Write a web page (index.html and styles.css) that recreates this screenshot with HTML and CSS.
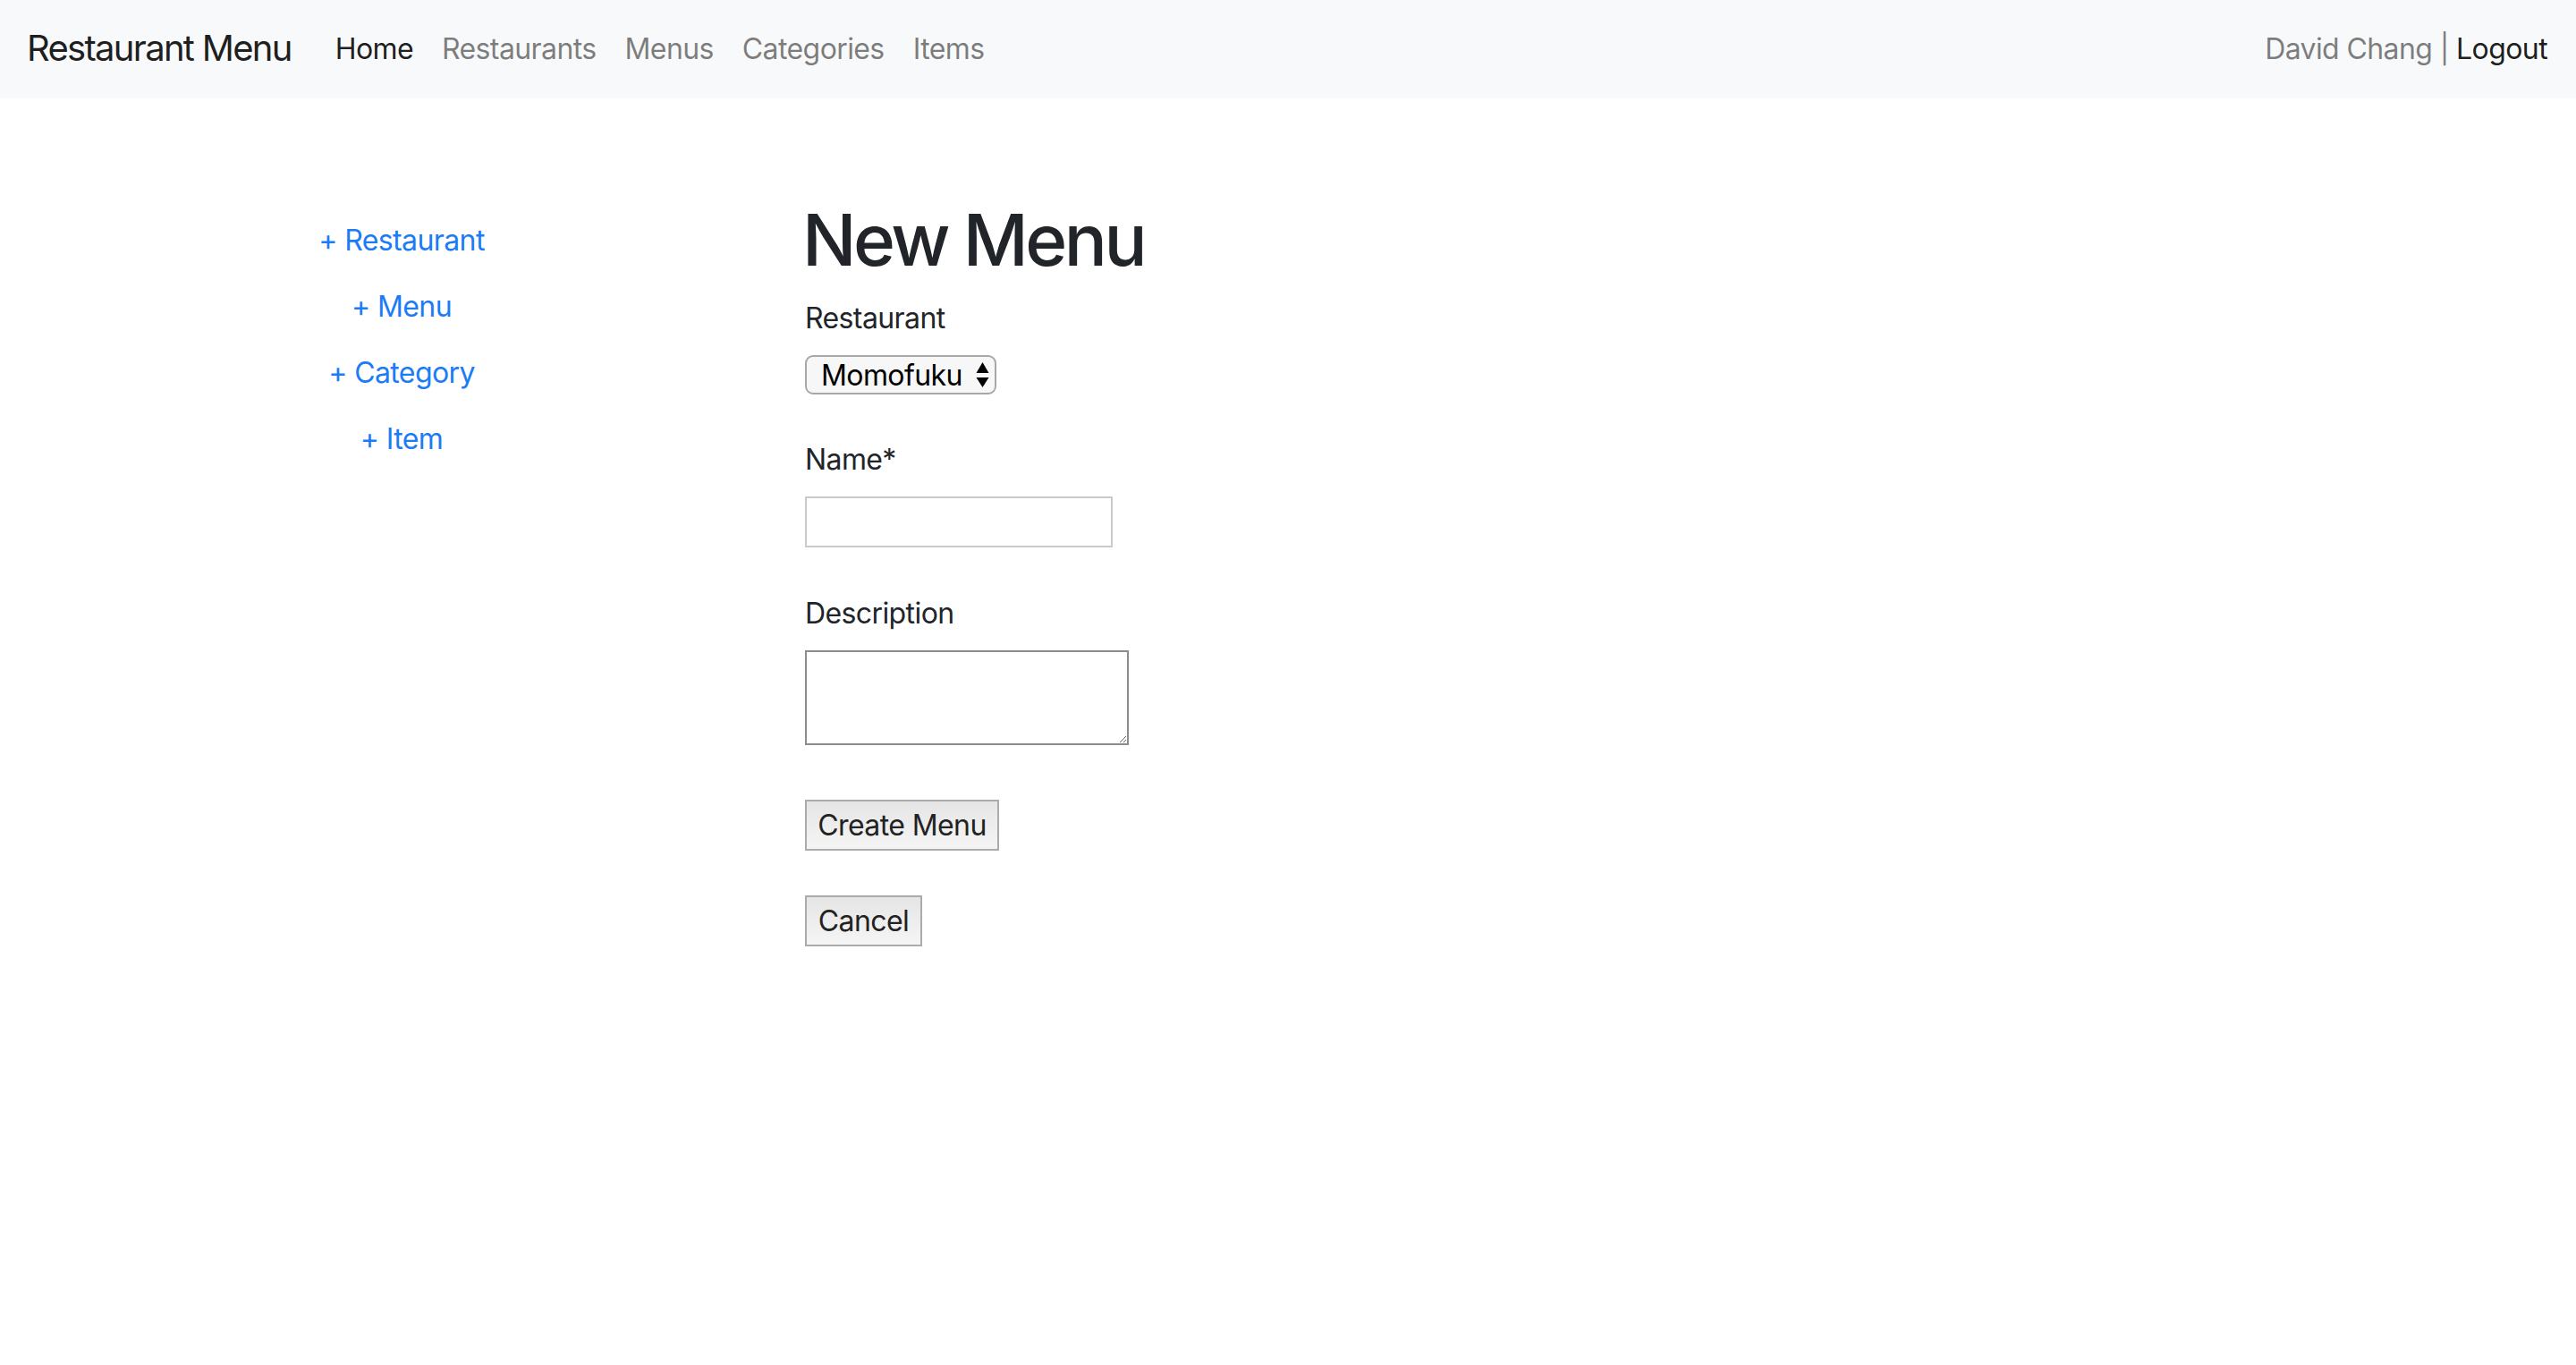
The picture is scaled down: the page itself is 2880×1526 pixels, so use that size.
FILE: index.html
```html
<!DOCTYPE html>
<html lang="en">
<head>
<meta charset="utf-8">
<title>Restaurant Menu</title>
<link rel="stylesheet" href="styles.css">
</head>
<body>
<nav class="navbar">
  <a class="brand" href="#">Restaurant Menu</a>
  <ul class="nav-links">
    <li><a class="nav-link active" href="#">Home</a></li>
    <li><a class="nav-link" href="#">Restaurants</a></li>
    <li><a class="nav-link" href="#">Menus</a></li>
    <li><a class="nav-link" href="#">Categories</a></li>
    <li><a class="nav-link" href="#">Items</a></li>
  </ul>
  <div class="user">David Chang | <a class="logout" href="#">Logout</a></div>
</nav>

<div class="page">
  <aside class="sidebar">
    <ul class="side-links">
      <li><a class="side-link" href="#">+ Restaurant</a></li>
      <li><a class="side-link" href="#">+ Menu</a></li>
      <li><a class="side-link" href="#">+ Category</a></li>
      <li><a class="side-link" href="#">+ Item</a></li>
    </ul>
  </aside>

  <main class="content">
    <h1 class="title">New Menu</h1>
    <form class="form">
      <div class="field field-select">
        <label class="label" for="restaurant">Restaurant</label>
        <div class="select-wrap">
          <select id="restaurant" class="select">
            <option>Momofuku</option>
          </select>
          <svg class="select-arrows" width="17" height="30" viewBox="0 0 17 30" aria-hidden="true">
            <polygon points="1.5,13 8.5,1 15.5,13" fill="#000"/>
            <polygon points="1.5,18 8.5,29 15.5,18" fill="#000"/>
          </svg>
        </div>
      </div>

      <div class="field">
        <label class="label" for="name">Name*</label>
        <input id="name" class="text-input" type="text">
      </div>

      <div class="field field-last">
        <label class="label" for="description">Description</label>
        <textarea id="description" class="textarea"></textarea>
      </div>

      <div class="actions">
        <button type="submit" class="btn btn-create">Create Menu</button>
        <button type="button" class="btn btn-cancel">Cancel</button>
      </div>
    </form>
  </main>
</div>
</body>
</html>
```

FILE: styles.css
```css
* {
  box-sizing: border-box;
}

html,
body {
  margin: 0;
  padding: 0;
}

body {
  font-family: Inter, "Noto Sans", sans-serif;
  font-size: 32px;
  line-height: 48px;
  letter-spacing: -0.6px;
  color: #212529;
  background: #fff;
}

/* Navbar */
.navbar {
  display: flex;
  align-items: center;
  height: 110px;
  padding: 0 32px 0 30px;
  background: #f8f9fa;
}

.brand {
  font-size: 40px;
  line-height: 60px;
  letter-spacing: -1.7px;
  color: rgba(0, 0, 0, 0.9);
  text-decoration: none;
  margin-right: 33px;
  margin-bottom: 3px;
}

.nav-links {
  display: flex;
  list-style: none;
  margin: 0;
  padding: 0;
}

.nav-link {
  display: block;
  padding: 0 16px;
  line-height: 48px;
  color: rgba(0, 0, 0, 0.5);
  text-decoration: none;
}

.nav-link.active {
  color: rgba(0, 0, 0, 0.9);
}

.user {
  margin-left: auto;
  color: rgba(0, 0, 0, 0.5);
}

.logout {
  color: rgba(0, 0, 0, 0.9);
  text-decoration: none;
}

/* Page layout */
.page {
  display: grid;
  grid-template-columns: 600px 1fr;
  margin-left: 300px;
}

.sidebar {
  padding-top: 122px;
}

.side-links {
  list-style: none;
  margin: 0;
  padding: 0;
  width: 298px;
  text-align: center;
}

.side-link {
  display: block;
  line-height: 74px;
  color: #1b7cf6;
  text-decoration: none;
}

.content {
  padding-top: 110px;
}

.title {
  margin: 0 0 16px -3px;
  font-size: 80px;
  line-height: 96px;
  font-weight: 500;
  letter-spacing: -3.5px;
  color: #212529;
}

/* Form */
.field {
  margin-bottom: 50px;
}

.field-select {
  margin-bottom: 49px;
}

.field-last {
  margin-bottom: 61px;
}

.label {
  display: block;
  margin-bottom: 17px;
}

.select-wrap {
  position: relative;
  width: 214px;
  height: 44px;
}

.select {
  display: block;
  width: 214px;
  height: 44px;
  -webkit-appearance: none;
  appearance: none;
  margin: 0;
  padding: 0 0 0 16px;
  border: 2px solid #a8a8a8;
  border-radius: 9px;
  background: #f7f7f7;
  font-family: Inter, "Noto Sans", sans-serif;
  font-size: 32px;
  letter-spacing: -0.6px;
  color: #000;
}

.select-arrows {
  position: absolute;
  left: 190px;
  top: 7px;
  pointer-events: none;
}

.text-input {
  display: block;
  width: 344px;
  height: 57px;
  margin: 0;
  padding: 0 8px;
  border: 2px solid #cacaca;
  border-radius: 0;
  background: #fff;
  font-family: Inter, "Noto Sans", sans-serif;
  font-size: 32px;
}

.textarea {
  display: block;
  width: 362px;
  height: 106px;
  margin: 0;
  padding: 4px;
  border: 2px solid #8c8c8c;
  border-radius: 0;
  background: #fff;
  font-family: Inter, "Noto Sans", sans-serif;
  font-size: 32px;
  resize: both;
}

.actions {
  display: flex;
  flex-direction: column;
  align-items: flex-start;
  gap: 50px;
}

.btn {
  display: block;
  height: 57px;
  margin: 0;
  padding: 0;
  border: 2px solid #ababab;
  border-radius: 0;
  background: linear-gradient(#e5e5e5, #f5f5f5);
  font-family: Inter, "Noto Sans", sans-serif;
  font-size: 32px;
  letter-spacing: -0.6px;
  color: #222;
  text-align: center;
}

.btn-create {
  width: 217px;
}

.btn-cancel {
  width: 131px;
}
```
